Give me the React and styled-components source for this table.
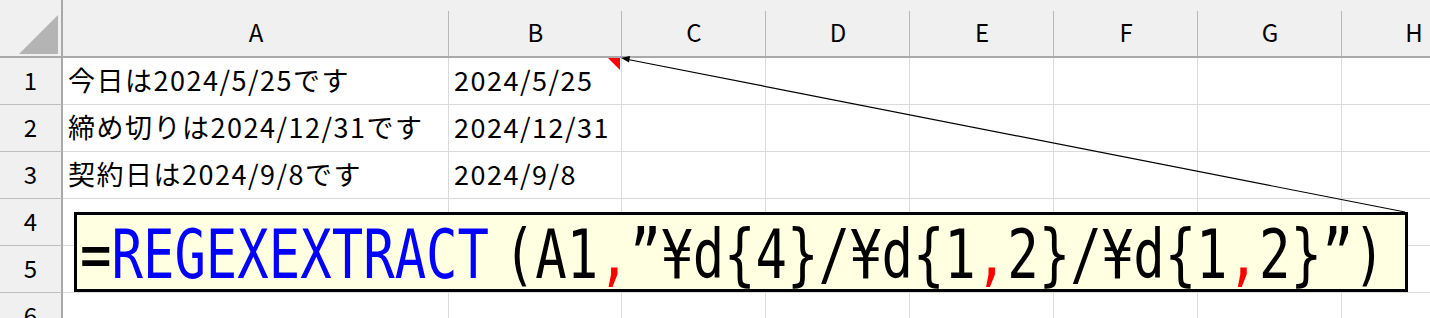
import React from "react";
import styled, { createGlobalStyle } from "styled-components";

const GlobalStyle = createGlobalStyle`
  html, body { margin: 0; padding: 0; background: #ffffff; }
  body { font-family: "Noto Sans CJK JP", "Noto Sans", sans-serif; }
`;

const COLS = ["A", "B", "C", "D", "E", "F", "G", "H"];
const COL_WIDTHS = [386, 173, 144, 144, 144, 144, 144, 144];

const ROWS = [
  ["今日は2024/5/25です", "2024/5/25"],
  ["締め切りは2024/12/31です", "2024/12/31"],
  ["契約日は2024/9/8です", "2024/9/8"],
  [],
  [],
  [],
];

const Page = styled.div`
  position: relative;
  width: 1430px;
  height: 318px;
  overflow: hidden;
  background: #ffffff;
`;

const Grid = styled.div`
  display: grid;
  grid-template-columns: 63px ${COL_WIDTHS.map((w) => `${w}px`).join(" ")};
  grid-template-rows: 58px repeat(6, 47px);
`;

const Corner = styled.div`
  position: relative;
  background: #f0f0f0;
  border-right: 2px solid #a9a9a9;
  border-bottom: 2px solid #a9a9a9;
  box-sizing: border-box;
  &::after {
    content: "";
    position: absolute;
    right: 3px;
    bottom: 2px;
    width: 0;
    height: 0;
    border-left: 39px solid transparent;
    border-bottom: 39px solid #b4b4b4;
  }
`;

const ColHeader = styled.div`
  position: relative;
  box-sizing: border-box;
  background: #f0f0f0;
  border-bottom: 2px solid #a9a9a9;
  padding-top: 15px;
  font-size: 24px;
  line-height: 1.448;
  color: #000;
  text-align: center;
  &::after {
    content: "";
    position: absolute;
    right: 0;
    top: 11px;
    bottom: 0;
    width: 1px;
    background: #b9b9b9;
  }
`;

const RowHeader = styled.div`
  box-sizing: border-box;
  background: #f0f0f0;
  border-right: 2px solid #a9a9a9;
  border-bottom: 1px solid #bdbdbd;
  font-size: 24px;
  line-height: 44px;
  text-align: center;
  color: #000;
`;

const Cell = styled.div`
  position: relative;
  box-sizing: border-box;
  border-right: 1px solid #dadada;
  border-bottom: 1px solid #dadada;
  padding-left: 5px;
  font-size: 27px;
  letter-spacing: 1.5px;
  line-height: 44px;
  color: #000;
  white-space: nowrap;
  ${(p) =>
    p.$comment &&
    `
    &::after {
      content: "";
      position: absolute;
      right: 1px;
      top: 0;
      width: 0;
      height: 0;
      border-left: 12px solid transparent;
      border-top: 12px solid #ff0000;
    }
  `}
`;

const Overlay = styled.svg`
  position: absolute;
  left: 0;
  top: 0;
  pointer-events: none;
`;

const CommentBox = styled.div`
  position: absolute;
  left: 74px;
  top: 212px;
  width: 1334px;
  height: 80px;
  box-sizing: border-box;
  border: 3px solid #000;
  background: #ffffe1;
  overflow: hidden;
  display: flex;
  align-items: flex-start;
`;

const FormulaLine = styled.div`
  display: inline-block;
  white-space: pre;
  font-family: "DejaVu Sans Mono", "Liberation Mono", monospace;
  font-size: 67px;
  line-height: 74px;
  color: #000;
  margin-left: 3px;
  margin-top: 3px;
  transform: scaleX(${(p) => p.$scale});
  transform-origin: left center;
`;

const Fn = styled.span`
  color: #0000ff;
`;

const Args = styled.span`
  margin-left: 19px;
`;

const Sep = styled.span`
  color: #ff0000;
`;

export default function App() {
  return (
    <>
      <GlobalStyle />
      <Page>
        <Grid>
          <Corner />
          {COLS.map((c) => (
            <ColHeader key={c}>{c}</ColHeader>
          ))}
          {ROWS.map((row, ri) => (
            <React.Fragment key={ri}>
              <RowHeader>{ri + 1}</RowHeader>
              {COLS.map((c, ci) => (
                <Cell key={c} $comment={ri === 0 && ci === 1}>
                  {row[ci] || ""}
                </Cell>
              ))}
            </React.Fragment>
          ))}
        </Grid>
        <Overlay width="1430" height="318" viewBox="0 0 1430 318">
          <line x1="1405" y1="212" x2="628" y2="59.5" stroke="#000" strokeWidth="1.2" />
          <polygon points="621,58 630,56 629,62.5" fill="#000" />
        </Overlay>
        <CommentBox>
          <FormulaLine $scale={0.78}>
            =<Fn>REGEXEXTRACT</Fn>
            <Args>
              (A1<Sep>,</Sep>”¥d{"{"}4{"}"}/¥d{"{"}1<Sep>,</Sep>2{"}"}/¥d{"{"}1<Sep>,</Sep>2{"}"}”)
            </Args>
          </FormulaLine>
        </CommentBox>
      </Page>
    </>
  );
}
